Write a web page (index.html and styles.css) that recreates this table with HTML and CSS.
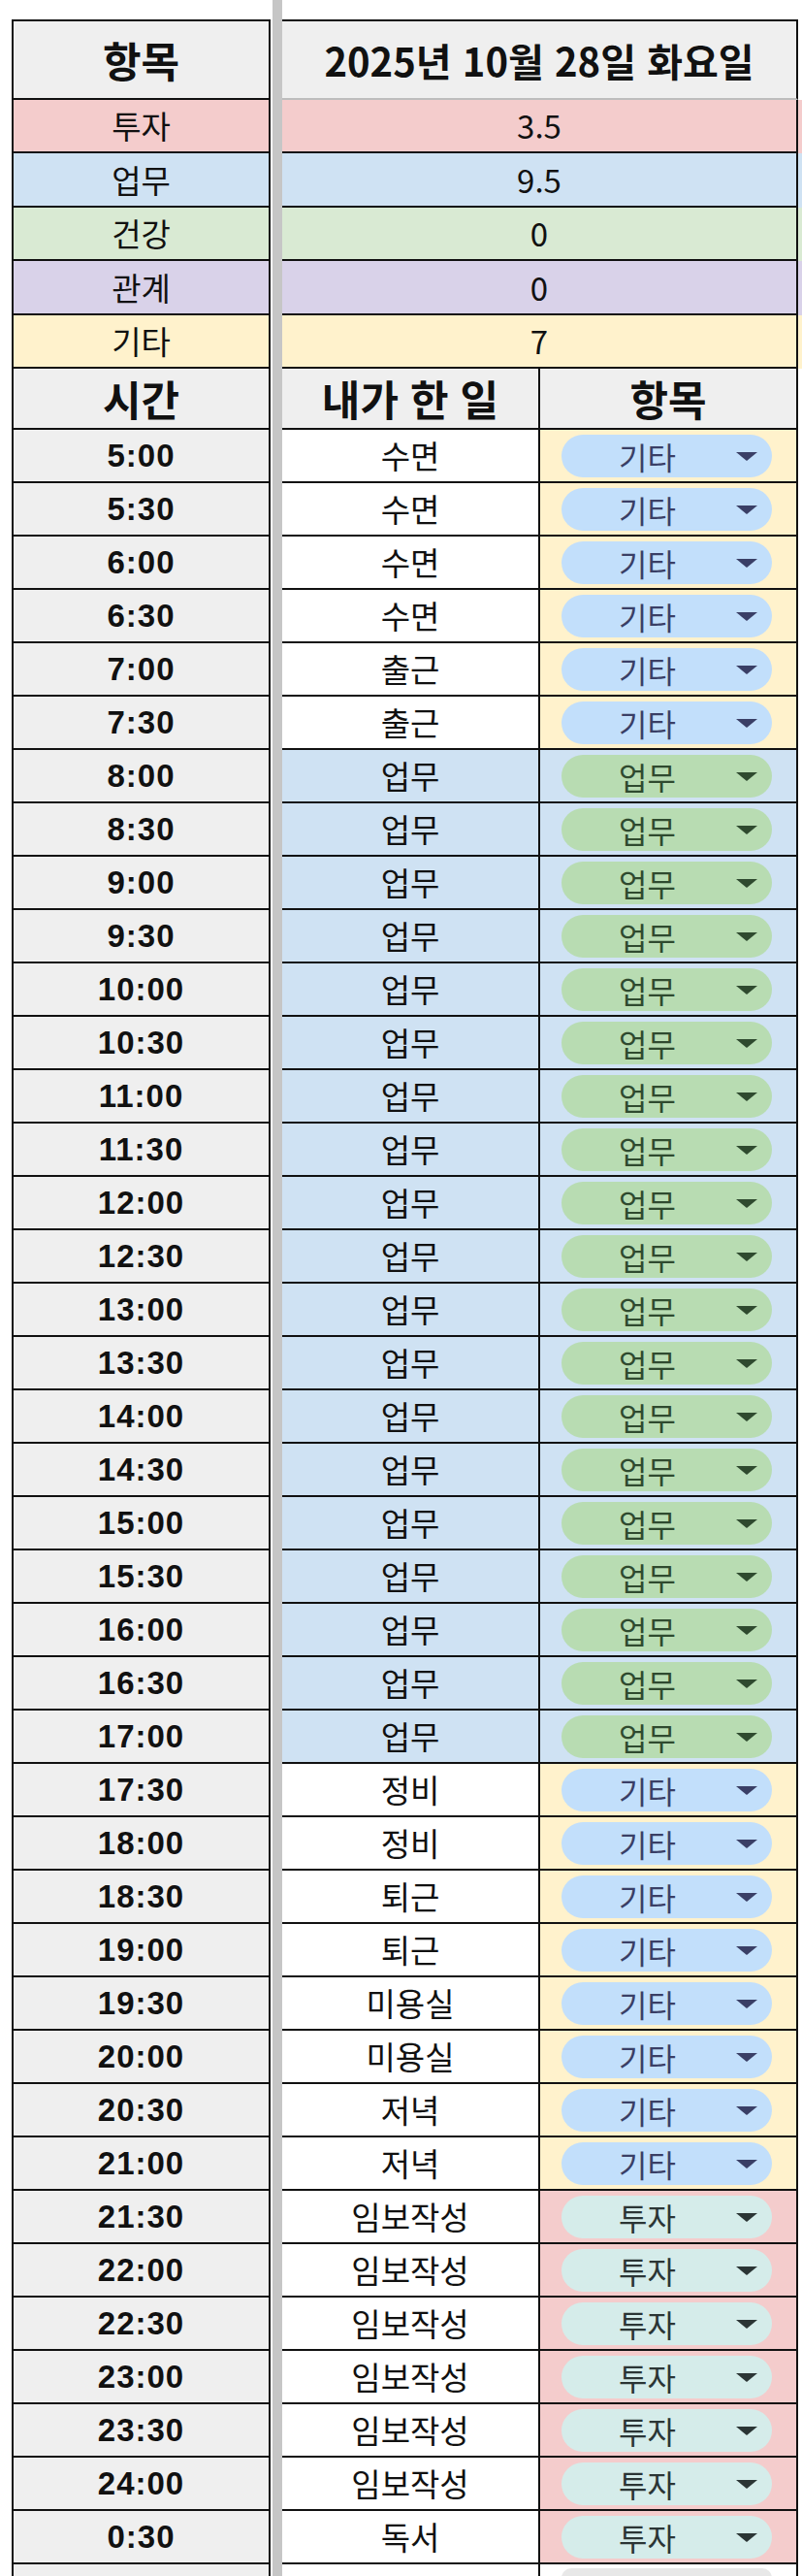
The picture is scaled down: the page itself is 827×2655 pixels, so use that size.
FILE: index.html
```html
<!DOCTYPE html>
<html lang="ko">
<head>
<meta charset="utf-8">
<title>시간 기록</title>
<link rel="stylesheet" href="styles.css">
</head>
<body>
<div class="sheet">
  <div class="row gap"></div>
  <div class="row head1">
    <div class="c a hdr">항목</div>
    <div class="c bc hdr date">2025년 10월 28일 화요일</div>
    <div class="c d dh"></div>
  </div>
  <div class="row sum s1"><div class="c a">투자</div><div class="c bc">3.5</div><div class="c d"></div></div>
  <div class="row sum s2"><div class="c a">업무</div><div class="c bc">9.5</div><div class="c d"></div></div>
  <div class="row sum s3"><div class="c a">건강</div><div class="c bc">0</div><div class="c d"></div></div>
  <div class="row sum s4"><div class="c a">관계</div><div class="c bc">0</div><div class="c d"></div></div>
  <div class="row sum s5"><div class="c a">기타</div><div class="c bc">7</div><div class="c d"></div></div>
  <div class="row head2">
    <div class="c a hdr">시간</div>
    <div class="c b hdr">내가 한 일</div>
    <div class="c cc hdr">항목</div>
    <div class="c d"></div>
  </div>
  <div class="rows" id="rows"></div>
  <div class="row last">
    <div class="c a"></div>
    <div class="c b"></div>
    <div class="c cc"><span class="pill p-empty"></span></div>
    <div class="c d"></div>
  </div>
</div>
<script src="app.js"></script>
</body>
</html>
```
FILE: app.js
```js
const data = [
  ["5:00","수면","기타"],["5:30","수면","기타"],["6:00","수면","기타"],["6:30","수면","기타"],
  ["7:00","출근","기타"],["7:30","출근","기타"],
  ["8:00","업무","업무"],["8:30","업무","업무"],["9:00","업무","업무"],["9:30","업무","업무"],
  ["10:00","업무","업무"],["10:30","업무","업무"],["11:00","업무","업무"],["11:30","업무","업무"],
  ["12:00","업무","업무"],["12:30","업무","업무"],["13:00","업무","업무"],["13:30","업무","업무"],
  ["14:00","업무","업무"],["14:30","업무","업무"],["15:00","업무","업무"],["15:30","업무","업무"],
  ["16:00","업무","업무"],["16:30","업무","업무"],["17:00","업무","업무"],
  ["17:30","정비","기타"],["18:00","정비","기타"],["18:30","퇴근","기타"],["19:00","퇴근","기타"],
  ["19:30","미용실","기타"],["20:00","미용실","기타"],["20:30","저녁","기타"],["21:00","저녁","기타"],
  ["21:30","임보작성","투자"],["22:00","임보작성","투자"],["22:30","임보작성","투자"],
  ["23:00","임보작성","투자"],["23:30","임보작성","투자"],["24:00","임보작성","투자"],
  ["0:30","독서","투자"]
];
const cls = {"기타":"k-etc","업무":"k-work","투자":"k-inv"};
const wrap = document.getElementById("rows");
wrap.innerHTML = data.map(([t, w, k]) =>
  `<div class="row tr ${cls[k]}">` +
  `<div class="c a time">${t}</div>` +
  `<div class="c b task">${w}</div>` +
  `<div class="c cc cat"><span class="pill"><span class="pt">${k}</span><span class="arr"></span></span></div>` +
  `<div class="c d"></div></div>`
).join("");
```
FILE: styles.css
```css
html, body {
  margin: 0;
  padding: 0;
  background: #fff;
}
body {
  width: 827px;
  height: 2655px;
  overflow: hidden;
  font-family: "Noto Sans CJK KR", "Noto Sans", sans-serif;
  color: #111;
}
.sheet {
  display: flex;
  flex-direction: column;
}
.rows {
  display: flex;
  flex-direction: column;
}
.row {
  display: grid;
  grid-template-columns: 12px 267px 12px 266px 266px 4px;
  background: linear-gradient(to right, transparent 281px, #c6c6c6 281px, #c6c6c6 291px, transparent 291px);
}
.gap { height: 20px; }
.c {
  display: flex;
  align-items: center;
  justify-content: center;
  box-sizing: border-box;
  border-bottom: 2px solid #111;
  font-size: 33px;
  line-height: 1;
  white-space: nowrap;
}
.a {
  grid-column: 2;
  border-left: 2px solid #111;
  border-right: 2px solid #111;
  background: #efefef;
}
.b {
  grid-column: 4;
  border-right: 2px solid #111;
}
.cc {
  grid-column: 5;
  border-right: 2px solid #111;
}
.bc {
  grid-column: 4 / 6;
  border-right: 2px solid #111;
}
.d {
  grid-column: 6;
  border-bottom: none;
}
.head1 { height: 83px; }
.head1 .c { border-top: 2px solid #111; }
.head1 .bc { border-bottom: 2px solid #bdbdbd; }
.head1 .d { border-top: none; }
.hdr {
  background: #efefef;
  font-weight: 700;
  font-size: 43px;
}
.hdr.date { font-size: 40px; }
.sum { height: 55px; }
.s2, .s4 { height: 56px; }
.s1 .c { background: #f4cccc; }
.s2 .c { background: #cfe2f3; }
.s3 .c { background: #d9ead3; }
.s4 .c { background: #d9d2e9; }
.s5 .c { background: #fff2cc; }
.head2 { height: 63px; }
.head2 .d { background: #fff; }
.tr { height: 55px; }
.time {
  font-family: "Liberation Sans", Arial, sans-serif;
  font-weight: 700;
  font-size: 33px;
  letter-spacing: 1px;
}
.task { background: #fff; }
.k-work .task { background: #cfe2f3; }
.k-etc .cat { background: #fff2cc; }
.k-work .cat { background: #cfe2f3; }
.k-inv .cat { background: #f4cccc; }
.cat { justify-content: flex-start; padding-left: 22px; }
.pill {
  position: relative;
  display: flex;
  align-items: center;
  width: 217px;
  height: 44px;
  border-radius: 22px;
  box-sizing: border-box;
  padding-right: 40px;
}
.pt {
  flex: 1;
  text-align: center;
  font-size: 32px;
}
.arr {
  position: absolute;
  right: 15px;
  top: 18px;
  width: 0;
  height: 0;
  border-left: 11px solid transparent;
  border-right: 11px solid transparent;
  border-top: 9px solid currentColor;
}
.k-etc .pill { background: #c2dffb; color: #3a3f66; }
.k-work .pill { background: #b8dcb2; color: #2f4a2f; }
.k-inv .pill { background: #d5ecea; color: #2b3535; }
.last { height: 12px; }
.last .c { border-bottom: none; }
.last .b, .last .cc { background: #fff; }
.last .cc { align-items: flex-start; padding-left: 22px; justify-content: flex-start; padding-top: 4px; }
.p-empty { background: #e8e8e8; height: 20px; }
```
